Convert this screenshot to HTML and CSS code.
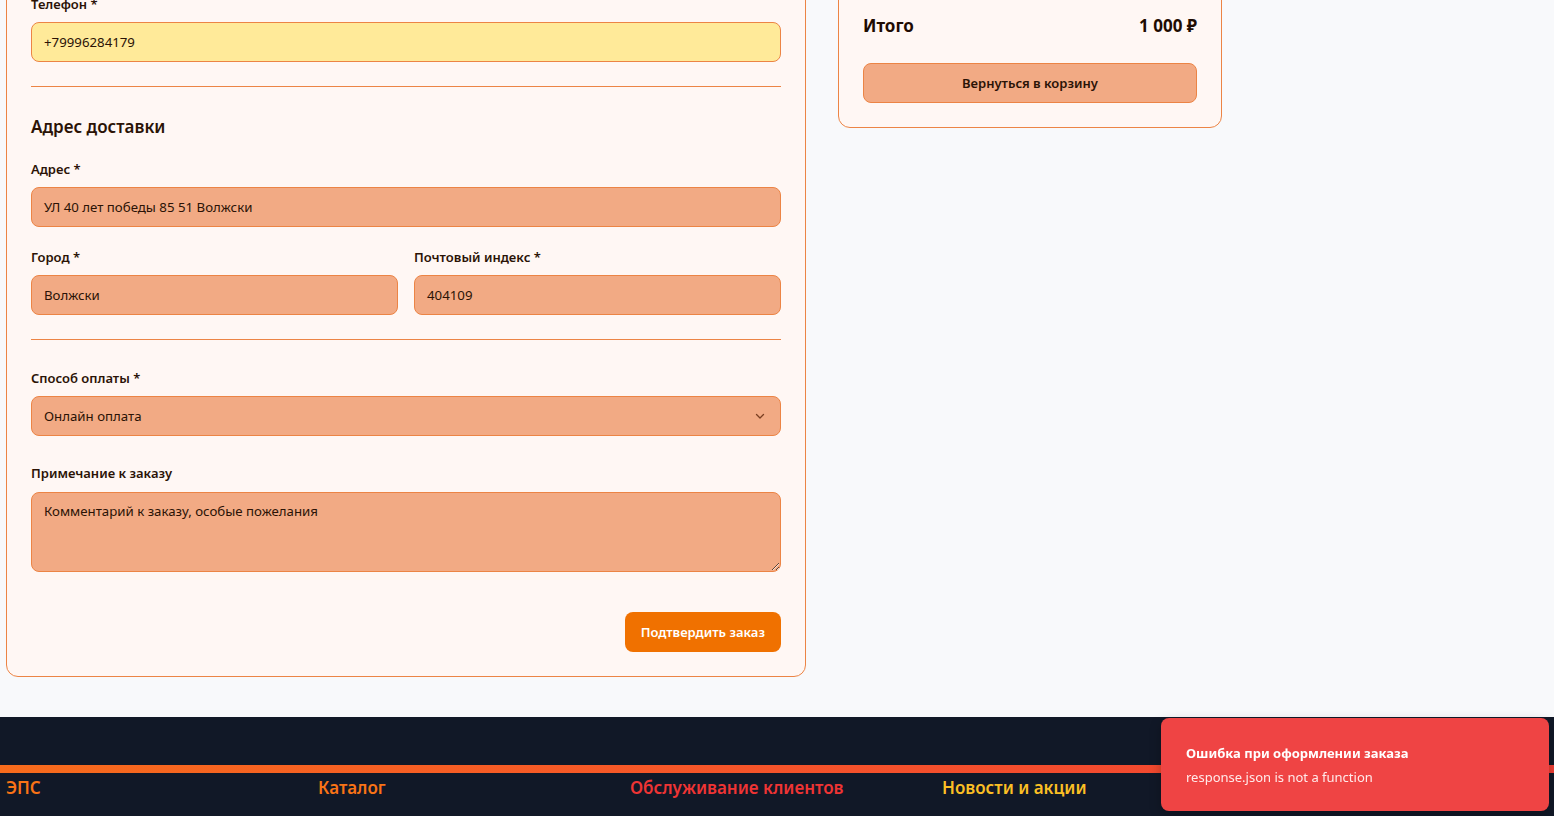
FILE: index.html
```html
<!DOCTYPE html>
<html lang="ru">
<head>
<meta charset="utf-8">
<title>Оформление заказа</title>
<link rel="stylesheet" href="styles.css">
</head>
<body>
<main class="checkout">
  <section class="card form-card">
    <div class="field">
      <label class="label">Телефон *</label>
      <div class="input input-autofill">+79996284179</div>
    </div>
    <hr class="divider">
    <h2 class="section-title">Адрес доставки</h2>
    <div class="field">
      <label class="label">Адрес *</label>
      <div class="input">УЛ 40 лет победы 85 51 Волжски</div>
    </div>
    <div class="row">
      <div class="field">
        <label class="label">Город *</label>
        <div class="input">Волжски</div>
      </div>
      <div class="field">
        <label class="label">Почтовый индекс *</label>
        <div class="input">404109</div>
      </div>
    </div>
    <hr class="divider divider-wide">
    <div class="field">
      <label class="label">Способ оплаты *</label>
      <div class="input select">
        <span>Онлайн оплата</span>
        <svg class="chevron" width="12" height="12" viewBox="0 0 12 12"><path d="M2.5 4.5 L6 8 L9.5 4.5" fill="none" stroke="#7a3f22" stroke-width="1.3" stroke-linecap="round" stroke-linejoin="round"/></svg>
      </div>
    </div>
    <div class="field field-note">
      <label class="label label-note">Примечание к заказу</label>
      <textarea class="input textarea" placeholder="Комментарий к заказу, особые пожелания"></textarea>
    </div>
    <div class="actions">
      <button class="btn-primary">Подтвердить заказ</button>
    </div>
  </section>

  <aside class="card summary-card">
    <div class="total">
      <span>Итого</span>
      <span>1 000 ₽</span>
    </div>
    <button class="btn-secondary">Вернуться в корзину</button>
  </aside>
</main>

<footer class="footer">
  <div class="footer-bar"></div>
  <div class="footer-cols">
    <h3 class="footer-h orange">ЭПС</h3>
    <h3 class="footer-h orange">Каталог</h3>
    <h3 class="footer-h red">Обслуживание клиентов</h3>
    <h3 class="footer-h yellow">Новости и акции</h3>
  </div>
</footer>

<div class="toast">
  <div class="toast-title">Ошибка при оформлении заказа</div>
  <div class="toast-msg">response.json is not a function</div>
</div>
</body>
</html>
```

FILE: styles.css
```css
* { box-sizing: border-box; }

html, body {
  margin: 0;
  padding: 0;
  height: 816px;
  overflow: hidden;
}

body {
  background: #f8f9fb;
  font-family: "Noto Sans", "Open Sans", sans-serif;
  color: #2b1306;
}

.checkout {
  display: flex;
  align-items: flex-start;
  gap: 32px;
  padding-left: 6px;
  margin-top: -30px;
}

.card {
  background: #fff7f4;
  border: 1px solid #ec8445;
  border-radius: 12px;
  padding: 23px 24px 24px 24px;
}

.form-card {
  width: 800px;
}

.summary-card {
  width: 384px;
}

.field {
  display: flex;
  flex-direction: column;
}

.label {
  font-size: 13px;
  font-weight: 600;
  line-height: 20px;
  margin-bottom: 8px;
  color: #2b1306;
}

.label-note {
  margin-bottom: 9px;
}

.input {
  height: 40px;
  border: 1px solid #ec8445;
  border-radius: 8px;
  background: #f2aa84;
  padding: 0 12px;
  font-size: 13.25px;
  line-height: 38px;
  color: #2b1306;
  font-family: inherit;
  width: 100%;
}

.input-autofill {
  background: #ffea99;
}

.divider {
  border: 0;
  border-top: 1px solid #ec8445;
  margin: 24px 0 26px 0;
  height: 0;
}

.divider-wide {
  margin-bottom: 28px;
}

.section-title {
  margin: 0 0 18px 0;
  font-size: 17px;
  font-weight: 600;
  line-height: 28px;
  color: #2b1306;
}

.row {
  display: grid;
  grid-template-columns: 1fr 1fr;
  gap: 16px;
  margin-top: 20px;
}

.select {
  display: flex;
  align-items: center;
  justify-content: space-between;
  padding-right: 14px;
}

.chevron {
  display: block;
}

.field-note {
  margin-top: 27px;
}

.textarea {
  height: 80px;
  line-height: 20px;
  padding: 8px 12px;
  resize: vertical;
  display: block;
}

.textarea::placeholder {
  color: #2b1306;
  opacity: 1;
}

.actions {
  display: flex;
  justify-content: flex-end;
  margin-top: 40px;
}

.btn-primary {
  height: 40px;
  padding: 0 16px;
  background: #f07100;
  color: #fff;
  border: 0;
  border-radius: 8px;
  font-family: inherit;
  font-size: 13px;
  font-weight: 600;
}

.total {
  display: flex;
  justify-content: space-between;
  font-size: 17px;
  font-weight: 700;
  line-height: 28px;
  color: #1f0c03;
  padding-top: 18px;
}

.btn-secondary {
  margin-top: 23px;
  width: 100%;
  height: 40px;
  background: #f2aa84;
  border: 1px solid #ec8445;
  border-radius: 8px;
  font-family: inherit;
  font-size: 13px;
  font-weight: 600;
  color: #2b1306;
}

.footer {
  margin-top: 40px;
  background: #111827;
  padding-top: 48px;
  height: 200px;
}

.footer-bar {
  height: 8px;
  background: linear-gradient(90deg, #f76b1c 0%, #f5532a 50%, #ef3f34 100%);
}

.footer-cols {
  display: grid;
  grid-template-columns: repeat(4, 280px);
  gap: 32px;
  padding-left: 6px;
}

.footer-h {
  margin: 0;
  font-size: 17px;
  font-weight: 600;
  line-height: 30px;
}

.orange { color: #f97316; }
.red { color: #ef3434; }
.yellow { color: #fbbf24; }

.toast {
  position: fixed;
  right: 5px;
  bottom: 5px;
  width: 388px;
  height: 93px;
  background: #ef4444;
  border-radius: 8px;
  padding: 25px 24px 24px 25px;
  color: #fff;
  box-shadow: 0 4px 12px rgba(0, 0, 0, 0.25);
}

.toast-title {
  font-size: 13px;
  font-weight: 700;
  line-height: 20px;
}

.toast-msg {
  margin-top: 4px;
  font-size: 13px;
  line-height: 20px;
  color: #ffeaea;
}
```
